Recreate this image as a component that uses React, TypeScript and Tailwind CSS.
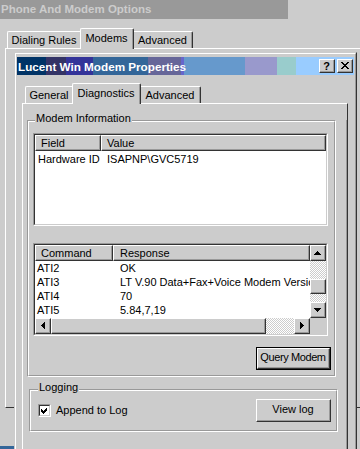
import React from 'react';

type Box = { className?: string; inner?: string; children?: React.ReactNode };

// classic 3d raised edge: white / dark outside, grey shadow inside
function Raised({ className = '', inner = '', children }: Box) {
  return (
    <div className={`border border-t-white border-l-white border-r-[#333333] border-b-[#333333] ${className}`}>
      <div className={`h-full w-full border-r border-b border-[#999999] bg-[#cccccc] ${inner}`}>{children}</div>
    </div>
  );
}

function Sunken({ className = '', inner = '', children }: Box) {
  return (
    <div className={`border border-t-[#999999] border-l-[#999999] border-r-white border-b-white ${className}`}>
      <div className={`h-full w-full border border-t-[#333333] border-l-[#333333] border-r-[#cccccc] border-b-[#cccccc] bg-white overflow-hidden ${inner}`}>
        {children}
      </div>
    </div>
  );
}

function GroupBox({ label, className = '', labelPos = '', inner = '', children }: Box & { label: string; labelPos?: string }) {
  return (
    <div className={`relative border border-t-[#999999] border-l-[#999999] border-r-white border-b-white ${className}`}>
      <div className={`h-full border border-t-white border-l-white border-r-[#999999] border-b-[#999999] ${inner}`}>{children}</div>
      <span className={`absolute px-[1px] bg-[#cccccc] leading-[13px] ${labelPos}`}>{label}</span>
    </div>
  );
}

const Dither = 'bg-[repeating-conic-gradient(#ffffff_0%_25%,#cccccc_0%_50%)] bg-[length:2px_2px]';

function Arrow({ dir }: { dir: 'up' | 'down' | 'left' | 'right' }) {
  const pts = {
    up: '3.5,0 7,4 0,4',
    down: '0,0 7,0 3.5,4',
    left: '4,0 4,7 0,3.5',
    right: '0,0 4,3.5 0,7',
  }[dir];
  const vertical = dir === 'up' || dir === 'down';
  return (
    <svg width={vertical ? 7 : 4} height={vertical ? 4 : 7} viewBox={vertical ? '0 0 7 4' : '0 0 4 7'} shapeRendering="crispEdges">
      <polygon points={pts} fill="#000" />
    </svg>
  );
}

function ScrollBtn({ dir }: { dir: 'up' | 'down' | 'left' | 'right' }) {
  return (
    <Raised className="w-[16px] h-[16px] shrink-0" inner="flex items-center justify-center">
      <Arrow dir={dir} />
    </Raised>
  );
}

export default function App() {
  const rows = [
    ['ATI2', 'OK'],
    ['ATI3', 'LT V.90 Data+Fax+Voice Modem Version'],
    ['ATI4', '70'],
    ['ATI5', '5.84,7,19'],
  ];

  return (
    <div className="relative w-[360px] h-[449px] overflow-hidden bg-[#cccccc] text-black text-[11px] leading-[13px] font-['Liberation_Sans',Arial,sans-serif]">
      {/* background dialog: Phone And Modem Options */}
      <div className="w-[288px] h-[19px] bg-[#999999] pl-[1px] flex items-center text-[#cccccc] font-bold text-[11.5px]">
        Phone And Modem Options
      </div>

      <div className="mt-[9px] h-[20px] pl-[7px] flex items-end relative z-10">
        <div className="w-[73px] h-[17px] border-t border-l border-white rounded-tl-[2px] bg-[#cccccc] flex justify-center pt-[2px]">
          Dialing Rules
        </div>
        <div className="w-[54px] h-[21px] -mb-px border-t border-l border-white border-r border-r-[#333333] rounded-t-[2px] bg-[#cccccc]">
          <div className="h-full border-r border-[#999999] flex justify-center pt-[3px]">Modems</div>
        </div>
        <div className="w-[59px] h-[17px] border-t border-r border-t-white border-r-[#333333] rounded-tr-[2px] bg-[#cccccc]">
          <div className="h-full border-r border-[#999999] flex justify-center pt-[2px]">Advanced</div>
        </div>
      </div>

      <div className="ml-[5px] h-[360px] border-t border-l border-b border-t-white border-l-white border-b-[#333333]" />
      <div className="mt-[38px] h-[3px] w-[14px] bg-[#336699]" />

      {/* front window: Lucent Win Modem Properties */}
      <div className="absolute z-20 left-[14px] top-[52px] w-[343px] h-[400px] bg-[#cccccc] border border-t-[#cccccc] border-l-[#cccccc] border-r-[#333333] border-b-[#333333]">
        <div className="h-full border border-t-white border-l-white border-r-[#999999] border-b-[#999999] p-[1px] pt-[3px] flex flex-col">
          <div className="h-[18px] shrink-0 flex items-center justify-between pl-[1px] pr-[1px] text-white font-bold text-[11.7px] bg-[linear-gradient(to_right,#003366_29px,#333366_29px,#333366_49px,#333399_49px,#333399_76px,#336699_76px,#336699_131px,#666699_131px,#666699_164px,#6666cc_164px,#6666cc_167px,#6699cc_167px,#6699cc_228px,#9999cc_228px,#9999cc_260px,#99cccc_260px,#99cccc_279px,#99ccff_279px)]">
            <span>Lucent Win Modem Properties</span>
            <div className="flex gap-[2px]">
              <Raised className="w-[16px] h-[14px]" inner="flex items-center justify-center text-black text-[11px] font-bold leading-[12px]">
                ?
              </Raised>
              <Raised className="w-[16px] h-[14px]" inner="flex items-center justify-center">
                <svg width="8" height="7" viewBox="0 0 8 7" shapeRendering="crispEdges">
                  <path d="M0 0h2l2 2.5L6 0h2L5 3.5 8 7H6L4 4.5 2 7H0l3-3.5z" fill="#000" />
                </svg>
              </Raised>
            </div>
          </div>

          {/* tabs */}
          <div className="mt-[8px] h-[20px] ml-[8px] flex items-end relative z-10 shrink-0">
            <div className="w-[47px] h-[17px] border-t border-l border-white rounded-tl-[2px] bg-[#cccccc] flex justify-center pt-[2px]">
              General
            </div>
            <div className="w-[69px] h-[21px] -mb-px border-t border-l border-white border-r border-r-[#333333] rounded-t-[2px] bg-[#cccccc]">
              <div className="h-full border-r border-[#999999] flex justify-center pt-[3px]">Diagnostics</div>
            </div>
            <div className="w-[60px] h-[17px] border-t border-r border-t-white border-r-[#333333] rounded-tr-[2px] bg-[#cccccc]">
              <div className="h-full border-r border-[#999999] flex justify-center pt-[2px]">Advanced</div>
            </div>
          </div>

          {/* tab page */}
          <div className="ml-[5px] w-[326px] h-[350px] shrink-0 border-t border-l border-r border-t-white border-l-white border-r-[#333333]">
            <div className="h-full border-r border-[#999999]">
              <GroupBox
                label="Modem Information"
                className="ml-[4px] mt-[16px] w-[309px] h-[257px]"
                labelPos="-top-[9px] left-[7px]"
              >
                <Sunken className="ml-[4px] mt-[11px] w-[295px] h-[93px]">
                  <div className="flex h-[16px]">
                    <Raised className="w-[66px] h-full" inner="pl-[5px] pt-[1px]">Field</Raised>
                    <Raised className="flex-1 h-full" inner="pl-[5px] pt-[1px]">Value</Raised>
                  </div>
                  <div className="flex h-[14px] mt-[1px] leading-[14px]">
                    <div className="w-[66px] pl-[3px]">Hardware ID</div>
                    <div className="pl-[6px]">ISAPNP\GVC5719</div>
                  </div>
                </Sunken>

                <Sunken className="ml-[4px] mt-[17px] w-[295px] h-[93px]" inner="flex flex-col">
                  <div className="flex h-[73px]">
                    <div className="flex-1 overflow-hidden">
                      <div className="flex h-[16px]">
                        <Raised className="w-[78px] h-full" inner="pl-[5px] pt-[1px]">Command</Raised>
                        <Raised className="flex-1 h-full" inner="pl-[6px] pt-[1px]">Response</Raised>
                      </div>
                      {rows.map(([cmd, resp]) => (
                        <div key={cmd} className="flex h-[14px] leading-[14px] whitespace-nowrap">
                          <div className="w-[78px] shrink-0 pl-[2px]">{cmd}</div>
                          <div className="pl-[7px]">{resp}</div>
                        </div>
                      ))}
                    </div>
                    <div className="w-[16px] flex flex-col">
                      <ScrollBtn dir="up" />
                      <div className={`h-[18px] ${Dither}`} />
                      <Raised className="h-[15px]" />
                      <div className={`h-[8px] ${Dither}`} />
                      <ScrollBtn dir="down" />
                    </div>
                  </div>
                  <div className="flex h-[16px]">
                    <ScrollBtn dir="left" />
                    <Raised className="w-[215px] h-full" />
                    <div className={`w-[28px] ${Dither}`} />
                    <ScrollBtn dir="right" />
                    <div className="w-[16px] bg-[#cccccc]" />
                  </div>
                </Sunken>

                <div className="mt-[11px] mr-[3px] flex justify-end">
                  <div className="w-[75px] h-[23px] border border-black">
                    <Raised className="h-full" inner="flex items-center justify-center pb-[1px] tracking-[-0.4px]">Query Modem</Raised>
                  </div>
                </div>
              </GroupBox>

              <GroupBox
                label="Logging"
                className="ml-[6px] mt-[12px] w-[309px] h-[43px]"
                labelPos="-top-[9px] left-[8px]"
                inner="flex items-center justify-between pl-[7px] pr-[5px]"
              >
                <div className="flex items-center gap-[5px]">
                  <Sunken className="w-[13px] h-[13px]" inner="flex items-center justify-center">
                    <svg width="7" height="7" viewBox="0 0 7 7" shapeRendering="crispEdges">
                      <path d="M6 0v3L2 7 0 5V2l2 2z" fill="#000" />
                    </svg>
                  </Sunken>
                  <span>Append to Log</span>
                </div>
                <Raised className="w-[75px] h-[23px]" inner="flex items-center justify-center pb-[1px]">View log</Raised>
              </GroupBox>
            </div>
          </div>
        </div>
      </div>
    </div>
  );
}
